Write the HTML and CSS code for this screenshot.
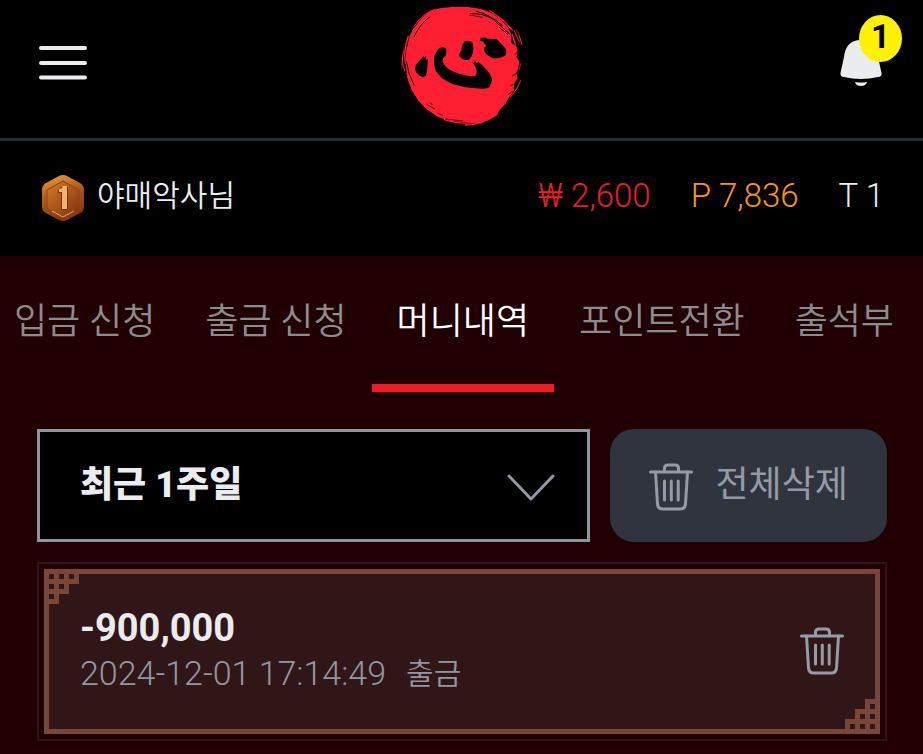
FILE: index.html
```html
<!DOCTYPE html>
<html lang="ko">
<head>
<meta charset="utf-8">
<meta name="viewport" content="width=device-width, initial-scale=1">
<title>머니내역</title>
<link rel="stylesheet" href="styles.css">
</head>
<body>
<svg class="sprite" aria-hidden="true">
  <symbol id="trash" viewBox="0 0 44 48">
    <g fill="none" stroke="currentColor" stroke-width="3" stroke-linecap="round" stroke-linejoin="round">
      <path d="M1.5 9H42.500M15.500 9V5.500Q15.500 2 19 2H26Q29.500 2 29.500 5.500V9"/>
      <path d="M6.500 9L8.500 41Q9 46 13.500 46H31.500Q36 46 36.500 41L38.500 9"/>
      <path d="M15.500 18V37M22.300 18V37M29.200 18V37"/>
    </g>
  </symbol>
  <symbol id="corner" viewBox="0 0 35 35">
    <path fill="currentColor" fill-rule="evenodd" d="M0 0H35V15H25V25H15V35H0ZM5 5V10H10V5ZM15 5V10H20V5ZM25 5V10H30V5ZM5 15V20H10V15ZM15 15V20H20V15ZM5 25V30H10V25Z"/>
  </symbol>
</svg>

<header class="topbar">
  <button class="icon-button" type="button" aria-label="메뉴">
    <svg class="menu-icon" viewBox="0 0 48 34"><path d="M2 2H46M2 17H46M2 31.500H46" stroke="currentColor" stroke-width="4" stroke-linecap="round"/></svg>
  </button>
  <a class="brand" href="#" aria-label="홈">
    <svg class="logo" viewBox="30 15 369 378">
      <path fill="#ff1e32" d="M62 108L72 88L91 62L108 45L129 31L157 24L196 20L239 21L279 29L311 42L337 60L353 77L366 101L367 129L382 137L386 158L382 171L391 183L388 203L382 219L386 234L375 252L374 274L361 291L348 313L331 331L322 347L298 361L262 370L221 366L182 362L145 350L113 328L88 302L68 271L58 239L50 200L51 155Z"/>
      <g fill="none" stroke="#ff1e32" stroke-linecap="round">
        <path stroke-width="3" d="M75 79Q97 43 139 27M252 24Q327 32 371 93M300 31Q346 57 370 89M45 151Q34 180 47 213M53 220Q57 247 72 265M390 105L399 134M376 92L391 126M395 242Q386 268 365 290"/>
        <path stroke-width="4" d="M58 109Q42 151 50 191M230 375Q280 375 324 342M369 103L379 132M166 359Q240 382 303 355"/>
        <path stroke-width="2" d="M39 171V202M382 90L389 102M396 190L391 209M60 251L69 262"/>
      </g>
      <g fill="none" stroke="#000" stroke-linecap="round">
        <path stroke-width="3" d="M244 41Q281 38 316 60M262 34Q306 45 339 76M318 63L361 101M331 82L356 103M75 110Q92 73 122 51M52 185Q57 220 75 255"/>
        <path stroke-width="2" d="M113 313L137 327M124 309L130 314M147 340L160 346M170 357L222 363M387 155L377 164M389 215L371 228M379 250L365 257M372 273L358 283M242 45L280 52"/>
      </g>
      <path d="M104 168Q96 178 87 187Q76 199 79 211Q84 226 101 231Q112 231 114 216L117 177L111 180L111 167L106 173ZM154 143Q169 139 172 151L171 166Q160 174 161 185Q169 205 196 216Q225 228 257 229Q266 220 261 204Q256 191 249 186L256 188L257 180L263 190L268 185Q278 192 291 208Q306 223 309 238Q308 256 297 264Q284 268 260 265Q223 263 190 252Q155 238 141 213Q132 194 136 170Q141 151 154 143ZM229 123Q241 120 251 128Q255 146 252 158Q246 176 236 180Q222 180 212 170Q208 161 218 150Q215 136 229 123ZM274 115L287 112L295 116L322 117Q337 129 350 146Q356 159 346 169Q330 177 312 175Q294 168 287 156Q282 146 291 137L281 124L273 124Z"/>
    </svg>
  </a>
  <button class="icon-button alerts" type="button" aria-label="알림 1">
    <svg class="bell" viewBox="0 0 42 48"><path fill="currentColor" d="M21 1C10 1 5 8 4 18L.5 34Q0 38 4 38Q21 42 38 38Q42 38 41.500 34L38 18C37 8 32 1 21 1ZM15 43Q21 44 27 43Q26 47 21 47Q16 47 15 43Z"/></svg>
    <span class="badge">1</span>
  </button>
</header>

<section class="account" aria-label="계정">
  <div class="user">
    <svg class="medal" viewBox="0 0 42 48" aria-hidden="true">
      <defs>
        <linearGradient id="rim" x2="0.300" y2="1"><stop stop-color="#f5a33d"/><stop offset=".45" stop-color="#b65d1c"/><stop offset="1" stop-color="#883812"/></linearGradient>
        <linearGradient id="face" x2="0.900" y2="1"><stop stop-color="#d37e29"/><stop offset="1" stop-color="#83330d"/></linearGradient>
      </defs>
      <path fill="url(#rim)" d="M17 2Q21 0 25 2L38 9Q42 11 42 16V33Q42 37 38 39L25 46Q21 48 17 46L4 39Q0 37 0 33V16Q0 11 4 9Z"/>
      <path fill="url(#face)" stroke="#8c4216" d="M21 7L37 16V34L21 43L5 34V16Z"/>
      <path fill="none" stroke="#f5a64e" d="M10 37L21 43L32 37"/>
      <path fill="#713009" d="M19 13H26V36H19V19H16V16Z"/>
      <path fill="#f2b267" d="M21 12H25V35H20V18H17V15Q20 15 21 12Z"/>
    </svg>
    <span>야매악사님</span>
  </div>
  <div class="balances">
    <span class="money">₩ 2,600</span>
    <span class="points">P 7,836</span>
    <span>T 1</span>
  </div>
</section>

<nav class="tabs">
  <a href="#">입금 신청</a>
  <a href="#">출금 신청</a>
  <a href="#" class="active" aria-current="page">머니내역</a>
  <a href="#">포인트전환</a>
  <a href="#">출석부</a>
</nav>

<main class="content">
  <div class="filters">
    <div class="period">
      <select aria-label="조회 기간"><option>최근 1주일</option></select>
      <svg class="chevron" viewBox="0 0 48 28" aria-hidden="true"><path d="M2 2L24 25L46 2" fill="none" stroke="currentColor" stroke-width="3" stroke-linecap="round" stroke-linejoin="round"/></svg>
    </div>
    <button class="delete-all" type="button"><svg class="trash" aria-hidden="true"><use href="#trash"/></svg><span>전체삭제</span></button>
  </div>
  <article class="record">
    <div class="record-inner">
      <svg class="corner corner-start" aria-hidden="true"><use href="#corner"/></svg>
      <svg class="corner corner-end" aria-hidden="true"><use href="#corner"/></svg>
      <div class="record-text">
        <strong>-900,000</strong>
        <div class="meta"><time datetime="2024-12-01T17:14:49">2024-12-01 17:14:49</time><span>출금</span></div>
      </div>
      <button class="icon-button" type="button" aria-label="삭제"><svg class="trash"><use href="#trash"/></svg></button>
    </div>
  </article>
</main>
</body>
</html>
```

FILE: styles.css
```css
* {
  box-sizing: border-box;
}

body {
  margin: 0;
  background: #200002;
  color: #eaecee;
  font-family: Roboto, "Noto Sans CJK KR", sans-serif;
  font-weight: 300;
  overflow-x: hidden;
}

svg {
  display: block;
}

a {
  color: inherit;
  text-decoration: none;
}

button,
select {
  font: inherit;
  color: inherit;
}

.sprite {
  position: absolute;
  width: 0;
  height: 0;
}

.icon-button {
  padding: 0;
  border: 0;
  background: none;
}

.topbar {
  display: grid;
  grid-template-columns: 1fr auto 1fr;
  align-items: center;
  height: 141px;
  padding: 0 41px 3px 39px;
  background: #000;
  border-bottom: 3px solid #252c32;
}

.topbar .icon-button {
  justify-self: start;
}

.menu-icon {
  width: 48px;
  height: 34px;
  margin-top: -10px;
}

.logo {
  width: 123px;
  height: 126px;
  overflow: visible;
}

.topbar .alerts {
  position: relative;
  justify-self: end;
}

.bell {
  width: 42px;
  height: 48px;
  margin-top: -10px;
}

.badge {
  position: absolute;
  top: -34px;
  right: -20px;
  width: 43px;
  height: 47px;
  border-radius: 50%;
  background: #fff200;
  color: #000;
  font: 700 33px/43px Roboto, sans-serif;
  text-align: center;
}

.account {
  display: flex;
  align-items: center;
  justify-content: space-between;
  height: 115px;
  padding: 0 39px 2px 42px;
  background: #000;
}

.user {
  display: flex;
  align-items: center;
  gap: 13px;
  font-size: 30px;
  font-weight: 350;
}

.user span {
  padding-bottom: 10px;
}

.medal {
  width: 42px;
  height: 48px;
}

.balances {
  display: flex;
  gap: 40px;
  padding-bottom: 5px;
  font-size: 33px;
}

.money {
  color: #ee1c25;
}

.points {
  color: #ff9800;
}

.tabs {
  display: flex;
  height: 136px;
  margin-left: -11px;
  font-size: 36px;
  font-weight: 350;
  line-height: 132px;
  color: #8c8c8c;
}

.tabs a {
  flex: none;
  padding: 0 25px;
}

.tabs .active {
  color: #fff;
  border-bottom: 8px solid #f01c24;
}

.content {
  padding: 37px 36px 13px 37px;
}

.filters {
  display: flex;
  gap: 20px;
  height: 113px;
}

.period {
  position: relative;
  flex: 2;
}

.period select {
  appearance: none;
  width: 100%;
  height: 100%;
  padding: 0 40px 2px;
  border: 3px solid #8e959f;
  border-radius: 0;
  background: #000;
  font-size: 36px;
  font-weight: 900;
}

.chevron {
  position: absolute;
  top: 45px;
  right: 35px;
  width: 48px;
  height: 28px;
  color: #9199a3;
  pointer-events: none;
}

.delete-all {
  display: flex;
  flex: 1;
  align-items: center;
  justify-content: center;
  gap: 22px;
  padding: 2px 0 0;
  border: 0;
  border-radius: 24px;
  background: #30343f;
  color: #959aa6;
  font-size: 36px;
  font-weight: 400;
  white-space: nowrap;
}

.delete-all span {
  padding-bottom: 12px;
}

.trash {
  width: 44px;
  height: 48px;
}

.record {
  margin-top: 20px;
  padding: 5px;
  border: 2px solid #2d1518;
}

.record-inner {
  position: relative;
  display: flex;
  align-items: center;
  justify-content: space-between;
  padding: 32px 31px 34px;
  border: 5px solid #784737;
  background: #301617;
}

.record-text {
  display: grid;
  gap: 2px;
}

.record-text strong {
  font-size: 38px;
  font-weight: 700;
  line-height: 44px;
}

.meta {
  display: flex;
  gap: 20px;
  align-items: center;
  font-size: 34px;
  line-height: 43px;
  color: #9097a1;
}

.meta span {
  font-size: 30px;
  font-weight: 350;
}

.record .icon-button {
  color: #959ca5;
}

.corner {
  position: absolute;
  width: 35px;
  height: 35px;
  color: #784737;
}

.corner-start {
  top: -5px;
  left: -5px;
}

.corner-end {
  right: -5px;
  bottom: -5px;
  transform: rotate(180deg);
}
```
